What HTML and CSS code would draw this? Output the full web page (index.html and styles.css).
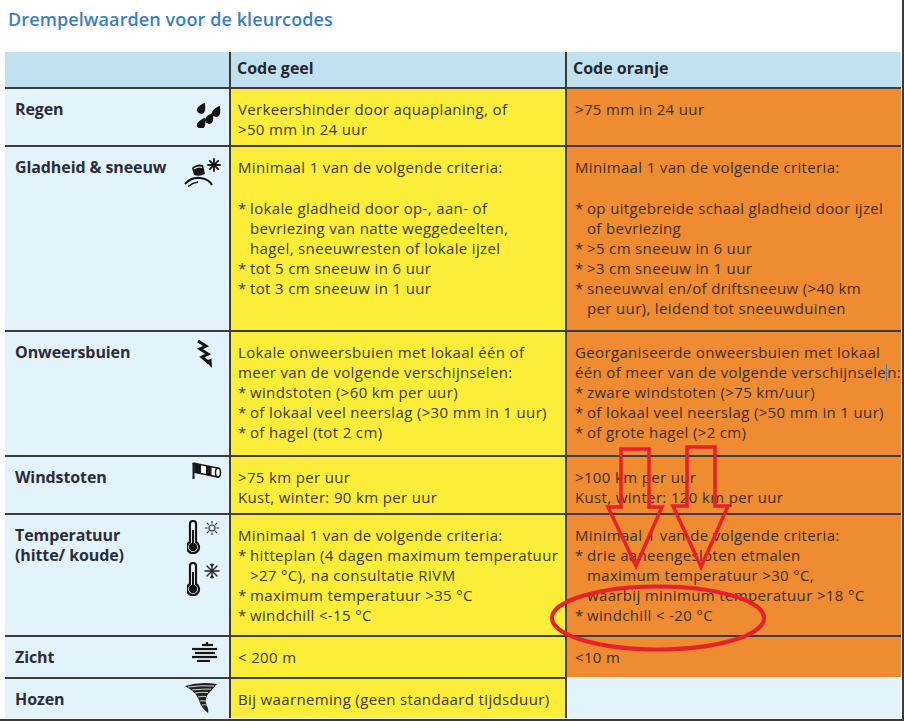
FILE: index.html
```html
<!DOCTYPE html>
<html lang="nl">
<head>
<meta charset="utf-8">
<title>Drempelwaarden voor de kleurcodes</title>
<link rel="stylesheet" href="styles.css">
</head>
<body>
<div class="page">
  <h1 class="title">Drempelwaarden voor de kleurcodes</h1>
  <div class="table">
    <div class="hcell"></div>
    <div class="hcell">Code geel</div>
    <div class="hcell">Code oranje</div>

    <!-- Regen -->
    <div class="label">
      <span>Regen</span>
      <svg class="ico ico-rain" viewBox="0 0 26 28" width="26" height="28">
        <g fill="#151515">
          <path d="M0,-6 C2.5,-2.5 4,0 4,2 A4,4 0 0 1 -4,2 C-4,0 -2.5,-2.5 0,-6Z" transform="translate(6,8) rotate(28)"/>
          <path d="M0,-6 C2.5,-2.5 4,0 4,2 A4,4 0 0 1 -4,2 C-4,0 -2.5,-2.5 0,-6Z" transform="translate(21,11) rotate(28)"/>
          <path d="M0,-6 C2.5,-2.5 4,0 4,2 A4,4 0 0 1 -4,2 C-4,0 -2.5,-2.5 0,-6Z" transform="translate(6,23) rotate(28)"/>
          <path d="M0,-6 C2.5,-2.5 4,0 4,2 A4,4 0 0 1 -4,2 C-4,0 -2.5,-2.5 0,-6Z" transform="translate(14,18) rotate(28)"/>
        </g>
      </svg>
    </div>
    <div class="cell y">Verkeershinder door aquaplaning, of<br>&gt;50 mm in 24 uur</div>
    <div class="cell o">&gt;75 mm in 24 uur</div>

    <!-- Gladheid -->
    <div class="label">
      <span>Gladheid &amp; sneeuw</span>
      <svg class="ico ico-skid" viewBox="0 0 38 30" width="38" height="30">
        <path d="M8,11 Q13,6 19,8 L21,17 Q15,20 10,18 Z" fill="#151515"/>
        <path d="M10,12 Q14,9 18,10.5" stroke="#fff" stroke-width="1.2" fill="none"/>
        <path d="M1,27 Q7,20 16,21 Q25,22 28,28" stroke="#151515" stroke-width="2" fill="none"/>
        <path d="M4,29.5 Q9,25.5 14,25" stroke="#151515" stroke-width="1.6" fill="none"/>
        <g stroke="#151515" stroke-width="1.8" stroke-linecap="round">
          <line x1="30" y1="2" x2="30" y2="14"/>
          <line x1="24" y1="8" x2="36" y2="8"/>
          <line x1="25.8" y1="3.8" x2="34.2" y2="12.2"/>
          <line x1="25.8" y1="12.2" x2="34.2" y2="3.8"/>
        </g>
      </svg>
    </div>
    <div class="cell y">
      <div>Minimaal 1 van de volgende criteria:</div>
      <div class="gap"></div>
      <div class="li"><span class="st">*</span><span>lokale gladheid door op-, aan- of<br>bevriezing van natte weggedeelten,<br>hagel, sneeuwresten of lokale ijzel</span></div>
      <div class="li"><span class="st">*</span><span>tot 5 cm sneeuw in 6 uur</span></div>
      <div class="li"><span class="st">*</span><span>tot 3 cm sneeuw in 1 uur</span></div>
    </div>
    <div class="cell o">
      <div>Minimaal 1 van de volgende criteria:</div>
      <div class="gap"></div>
      <div class="li"><span class="st">*</span><span>op uitgebreide schaal gladheid door ijzel<br>of bevriezing</span></div>
      <div class="li"><span class="st">*</span><span>&gt;5 cm sneeuw in 6 uur</span></div>
      <div class="li"><span class="st">*</span><span>&gt;3 cm sneeuw in 1 uur</span></div>
      <div class="li"><span class="st">*</span><span>sneeuwval en/of driftsneeuw (&gt;40 km<br>per uur), leidend tot sneeuwduinen</span></div>
    </div>

    <!-- Onweersbuien -->
    <div class="label">
      <span>Onweersbuien</span>
      <svg class="ico ico-bolt" viewBox="0 0 17 28" width="17" height="28">
        <polyline points="2,1 10,6 4,9 12,14 6,17 13,23" fill="none" stroke="#151515" stroke-width="3" stroke-linejoin="miter"/>
        <path d="M9.5,21 L16,28 L15.5,18.5 Z" fill="#151515"/>
      </svg>
    </div>
    <div class="cell y">
      <div>Lokale onweersbuien met lokaal één of<br>meer van de volgende verschijnselen:</div>
      <div class="li"><span class="st">*</span><span>windstoten (&gt;60 km per uur)</span></div>
      <div class="li"><span class="st">*</span><span>of lokaal veel neerslag (&gt;30 mm in 1 uur)</span></div>
      <div class="li"><span class="st">*</span><span>of hagel (tot 2 cm)</span></div>
    </div>
    <div class="cell o">
      <div>Georganiseerde onweersbuien met lokaal<br>één of meer van de volgende verschijnsele<span class="caret"></span>n:</div>
      <div class="li"><span class="st">*</span><span>zware windstoten (&gt;75 km/uur)</span></div>
      <div class="li"><span class="st">*</span><span>of lokaal veel neerslag (&gt;50 mm in 1 uur)</span></div>
      <div class="li"><span class="st">*</span><span>of grote hagel (&gt;2 cm)</span></div>
    </div>

    <!-- Windstoten -->
    <div class="label">
      <span>Windstoten</span>
      <svg class="ico ico-sock" viewBox="0 0 30 17" width="30" height="17">
        <line x1="1.5" y1="1" x2="1.5" y2="17" stroke="#151515" stroke-width="2"/>
        <line x1="0.5" y1="1.5" x2="4" y2="1.5" stroke="#151515" stroke-width="1.5"/>
        <path d="M3,1.5 L26,6 L26,15 L3,10.5 Z" fill="#fff" stroke="#151515" stroke-width="1.5"/>
        <path d="M3,1.5 L9,2.7 L9,11.7 L3,10.5 Z" fill="#151515"/>
        <path d="M14,3.7 L19.5,4.8 L19.5,13.8 L14,12.7 Z" fill="#151515"/>
        <ellipse cx="26" cy="10.5" rx="2.5" ry="4.5" fill="#fff" stroke="#151515" stroke-width="1.5"/>
      </svg>
    </div>
    <div class="cell y">&gt;75 km per uur<br>Kust, winter: 90 km per uur</div>
    <div class="cell o">&gt;100 km per uur<br>Kust, winter: 120 km per uur</div>

    <!-- Temperatuur -->
    <div class="label">
      <span>Temperatuur<br>(hitte/ koude)</span>
      <div class="ico ico-temp">
        <svg viewBox="0 0 34 34" width="34" height="34">
          <path d="M3,4 A3,3 0 0 1 9,4 L9,22 A6,6 0 1 1 3,22 Z" fill="#fff" stroke="#151515" stroke-width="2.2"/>
          <circle cx="6" cy="27" r="4.2" fill="#151515"/>
          <line x1="6" y1="10" x2="6" y2="25" stroke="#151515" stroke-width="2"/>
          <g stroke="#333" stroke-width="1.2" fill="none">
            <circle cx="25" cy="8" r="3"/>
            <line x1="25" y1="1" x2="25" y2="3.5"/>
            <line x1="25" y1="12.5" x2="25" y2="15"/>
            <line x1="18" y1="8" x2="20.5" y2="8"/>
            <line x1="29.5" y1="8" x2="32" y2="8"/>
            <line x1="20" y1="3" x2="21.8" y2="4.8"/>
            <line x1="28.2" y1="11.2" x2="30" y2="13"/>
            <line x1="20" y1="13" x2="21.8" y2="11.2"/>
            <line x1="28.2" y1="4.8" x2="30" y2="3"/>
          </g>
        </svg>
        <svg viewBox="0 0 34 34" width="34" height="34" class="t2">
          <path d="M3,4 A3,3 0 0 1 9,4 L9,22 A6,6 0 1 1 3,22 Z" fill="#fff" stroke="#151515" stroke-width="2.2"/>
          <circle cx="6" cy="27" r="4.2" fill="#151515"/>
          <line x1="6" y1="10" x2="6" y2="25" stroke="#151515" stroke-width="2"/>
          <g stroke="#222" stroke-width="1.4" stroke-linecap="round">
            <line x1="25" y1="2" x2="25" y2="16"/>
            <line x1="18" y1="9" x2="32" y2="9"/>
            <line x1="20" y1="4" x2="30" y2="14"/>
            <line x1="20" y1="14" x2="30" y2="4"/>
            <line x1="23.5" y1="2.5" x2="25" y2="4"/>
            <line x1="26.5" y1="2.5" x2="25" y2="4"/>
            <line x1="23.5" y1="15.5" x2="25" y2="14"/>
            <line x1="26.5" y1="15.5" x2="25" y2="14"/>
          </g>
        </svg>
      </div>
    </div>
    <div class="cell y">
      <div>Minimaal 1 van de volgende criteria:</div>
      <div class="li"><span class="st">*</span><span>hitteplan (4 dagen maximum temperatuur<br>&gt;27 °C), na consultatie RIVM</span></div>
      <div class="li"><span class="st">*</span><span>maximum temperatuur &gt;35 °C</span></div>
      <div class="li"><span class="st">*</span><span>windchill &lt;-15 °C</span></div>
    </div>
    <div class="cell o">
      <div>Minimaal 1 van de volgende criteria:</div>
      <div class="li"><span class="st">*</span><span>drie aaneengesloten etmalen<br>maximum temperatuur &gt;30 °C,<br>waarbij minimum temperatuur &gt;18 °C</span></div>
      <div class="li"><span class="st">*</span><span>windchill &lt; -20 °C</span></div>
    </div>

    <!-- Zicht -->
    <div class="label">
      <span>Zicht</span>
      <svg class="ico ico-fog" viewBox="0 0 28 20" width="28" height="20">
        <g stroke="#151515" stroke-width="2.2">
          <line x1="12" y1="3" x2="23" y2="3"/>
          <line x1="17" y1="0" x2="17" y2="4"/>
          <line x1="2" y1="7" x2="27" y2="7"/>
          <line x1="5" y1="11" x2="25" y2="11"/>
          <line x1="2" y1="15" x2="27" y2="15"/>
          <line x1="7" y1="19" x2="20" y2="19"/>
        </g>
      </svg>
    </div>
    <div class="cell y">&lt; 200 m</div>
    <div class="cell o">&lt;10 m</div>

    <!-- Hozen -->
    <div class="label">
      <span>Hozen</span>
      <svg class="ico ico-tornado" viewBox="0 0 32 32" width="32" height="32">
        <path d="M0,4 Q15,-1 32,2 Q27,8 23,12 Q19,18 22,24 Q24,28 23,31 Q16,26 14,18 Q11,10 0,4Z" fill="#222"/>
        <g stroke="#fff" stroke-width="0.8" fill="none">
          <path d="M3,5 Q16,3 29,4"/>
          <path d="M7,8 Q17,7 26,7"/>
          <path d="M10,11 Q17,10 23,10.5"/>
          <path d="M13,15 Q18,14 21,14.5"/>
          <path d="M15,19 Q18,18.5 21,19"/>
          <path d="M17,23 Q19.5,22.5 21.5,23"/>
        </g>
      </svg>
    </div>
    <div class="cell y">Bij waarneming (geen standaard tijdsduur)</div>
    <div class="cell e"></div>
  </div>

  <svg class="annot" viewBox="0 0 904 721" width="904" height="721">
    <g fill="none" stroke="#e8202a" stroke-width="3.5" stroke-linejoin="miter">
      <path d="M621,449 L649,449 L649,507 L662,507 L636,566 L608,507 L621,507 Z"/>
      <path d="M687,447 L715,447 L715,506 L728,506 L701,567 L673,506 L687,506 Z"/>
      <ellipse cx="658" cy="618" rx="106" ry="31.5" stroke-width="4"/>
    </g>
  </svg>
</div>
</body>
</html>
```

FILE: styles.css
```css
html, body {
  margin: 0;
  padding: 0;
  background: #ffffff;
}

body {
  font-family: "Open Sans", "Liberation Sans", sans-serif;
  color: #3a3a36;
}

.page {
  position: relative;
  width: 904px;
  height: 721px;
  box-sizing: border-box;
  border-right: 2px solid #3a3a3a;
  border-bottom: 2px solid #3a3a3a;
  overflow: hidden;
}

.title {
  margin: 0;
  height: 52px;
  box-sizing: border-box;
  padding: 7px 0 0 8px;
  font-size: 18px;
  line-height: 24px;
  font-weight: 600;
  letter-spacing: 0.1px;
  color: #3e7dbf;
}

.table {
  margin-left: 5px;
  width: 896px;
  display: grid;
  grid-template-columns: 224px 334px 334px;
  grid-template-rows: 35px 56px 183px 123px 56px 120px 40px 39px;
  gap: 2px;
  background: #3c3c3c;
}

.hcell {
  background: #c2e1ee;
  padding: 6px 6px 0 6px;
  font-size: 16px;
  line-height: 20px;
  font-weight: 700;
  color: #262630;
}

.label {
  background: #e3f3fb;
  display: flex;
  justify-content: space-between;
  align-items: flex-start;
  padding: 10px 7px 0 10px;
  font-size: 16px;
  line-height: 20px;
  font-weight: 700;
  color: #2c2c38;
  letter-spacing: -0.1px;
}

.ico {
  flex: none;
  display: block;
}

.ico-rain { margin-top: 1px; }
.ico-skid { margin-top: 0; }
.ico-bolt { margin-top: -2px; margin-right: 9px; }
.ico-sock { margin-top: -5px; }
.ico-temp { margin-top: -5px; margin-right: 1px; display: flex; flex-direction: column; gap: 8px; }
.ico-temp svg { display: block; }
.ico-fog { margin-top: -5px; margin-right: 4px; }
.ico-tornado { margin-top: -7px; margin-right: 5px; }

.cell {
  padding: 10px 6px 0 7px;
  font-size: 15px;
  line-height: 20px;
  white-space: nowrap;
  color: #3b3a30;
  letter-spacing: 0.35px;
}

.y { background: #fcee38; }
.o { background: #ef8b31; padding-left: 8px; color: #3d3024; }
.e { background: #e3f3fb; margin-top: -2px; }

.gap { height: 21px; }

.li {
  display: flex;
}

.st {
  flex: none;
  width: 12px;
}

.caret {
  display: inline-block;
  width: 0;
  height: 17px;
  vertical-align: -3px;
  border-left: 1.5px solid #3b7fd0;
}

.annot {
  position: absolute;
  left: 0;
  top: 0;
  pointer-events: none;
}
```
